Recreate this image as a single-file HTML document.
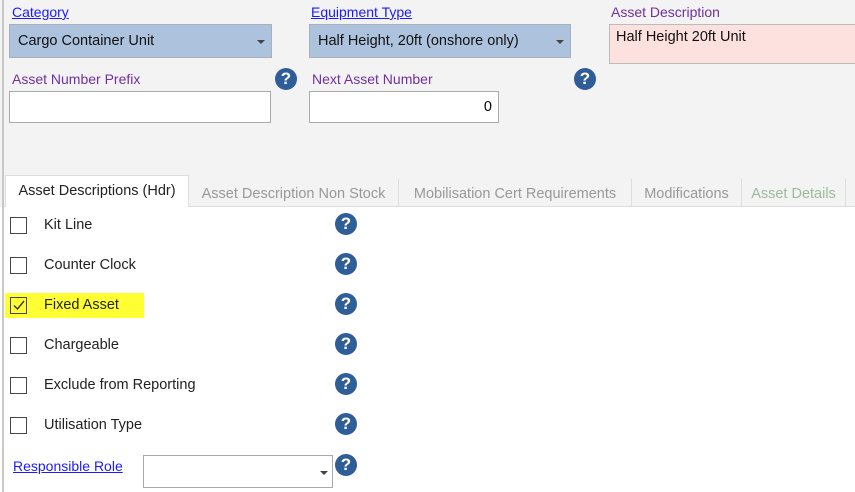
<!DOCTYPE html>
<html><head><style>
body{margin:0;width:855px;height:492px;background:#fff;font-family:"Segoe UI","Liberation Sans",sans-serif;font-size:14px;position:relative;overflow:hidden}
.top{position:absolute;left:0;top:0;width:855px;height:207px;background:#f3f3f3}
.vl{position:absolute;left:2px;top:0;width:2px;height:492px;background:#c8c8c8}
.a{position:absolute;white-space:nowrap}
.lnk{color:#1a1aff;text-decoration:underline}
.pur{color:#70309f}
.combo{position:absolute;background:#adc3dd;border:1px solid #a8b0bc;box-sizing:border-box;color:#111;padding:8px 8px;font-size:14.5px}
.combo:after{content:"";position:absolute;right:6px;top:15px;border:4px solid transparent;border-top:4px solid #444;border-bottom:0}
.inp{position:absolute;background:#fff;border:1px solid #aaa;box-sizing:border-box}
.help{position:absolute;width:22px;height:22px;border-radius:50%;background:#2e5d97;color:#fff;font-weight:bold;font-size:17px;text-align:center;line-height:22px;font-family:"Liberation Sans",sans-serif}
.tab{position:absolute;top:179px;height:28px;border-right:1px solid #ddd;color:#999;font-size:14.5px;line-height:30px;text-align:center;box-sizing:border-box}
.cb{position:absolute;left:10px;width:17px;height:17px;border:1.5px solid #444;box-sizing:border-box;background:transparent}
.lab{position:absolute;left:44px;color:#222;font-size:14.5px}
</style></head><body>
<div class="top"></div>
<div class="vl"></div>
<div class="a lnk" style="left:12px;top:4px">Category</div>
<div class="combo" style="left:9px;top:24px;width:263px;height:34px">Cargo Container Unit</div>
<div class="a lnk" style="left:311px;top:4px">Equipment Type</div>
<div class="combo" style="left:309px;top:24px;width:262px;height:34px">Half Height, 20ft (onshore only)</div>
<div class="a pur" style="left:611px;top:4px">Asset Description</div>
<div class="a" style="left:609px;top:24px;width:250px;height:40px;background:#fde1df;border:1px solid #bbb;box-sizing:border-box;padding:4px 6px;font-size:14.5px;color:#111">Half Height 20ft Unit</div>
<div class="a pur" style="left:12px;top:71px">Asset Number Prefix</div>
<div class="help" style="left:275px;top:68px">?</div>
<div class="inp" style="left:9px;top:91px;width:262px;height:32px"></div>
<div class="a pur" style="left:312px;top:71px">Next Asset Number</div>
<div class="help" style="left:574px;top:68px">?</div>
<div class="inp" style="left:309px;top:91px;width:190px;height:32px;text-align:right;padding:7px 6px;font-size:14.5px">0</div>
<div style="position:absolute;left:4px;top:206px;width:851px;height:1px;background:#ddd"></div>
<div class="tab" style="left:5px;top:175px;height:32px;width:184px;background:#fff;border:1px solid #ddd;border-bottom:none;color:#222;line-height:30px">Asset Descriptions (Hdr)</div>
<div class="tab" style="left:189px;width:210px">Asset Description Non Stock</div>
<div class="tab" style="left:399px;width:233px">Mobilisation Cert Requirements</div>
<div class="tab" style="left:632px;width:110px">Modifications</div>
<div class="tab" style="left:742px;width:104px;color:#9bbb98">Asset Details</div>
<div style="position:absolute;left:5px;top:293px;width:139px;height:25px;background:#ffff33"></div>
<div class="cb" style="top:217px"></div><div class="lab" style="top:217px">Kit Line</div><div class="help" style="left:335px;top:213px">?</div>
<div class="cb" style="top:257px"></div><div class="lab" style="top:257px">Counter Clock</div><div class="help" style="left:335px;top:253px">?</div>
<div class="cb" style="top:297px"></div><svg class="a" style="left:10px;top:297px" width="17" height="17"><path d="M4 8.5 L7.5 12 L14 4" stroke="#333" stroke-width="1.4" fill="none"/></svg><div class="lab" style="top:297px">Fixed Asset</div><div class="help" style="left:335px;top:293px">?</div>
<div class="cb" style="top:337px"></div><div class="lab" style="top:337px">Chargeable</div><div class="help" style="left:335px;top:333px">?</div>
<div class="cb" style="top:377px"></div><div class="lab" style="top:377px">Exclude from Reporting</div><div class="help" style="left:335px;top:373px">?</div>
<div class="cb" style="top:417px"></div><div class="lab" style="top:417px">Utilisation Type</div><div class="help" style="left:335px;top:413px">?</div>
<div class="a lnk" style="left:13px;top:458px">Responsible Role</div>
<div class="inp" style="left:143px;top:455px;width:190px;height:33px"><div style="position:absolute;right:4px;top:15px;border:4px solid transparent;border-top:4px solid #444;border-bottom:0"></div></div>
<div class="help" style="left:335px;top:454px">?</div>
</body></html>
